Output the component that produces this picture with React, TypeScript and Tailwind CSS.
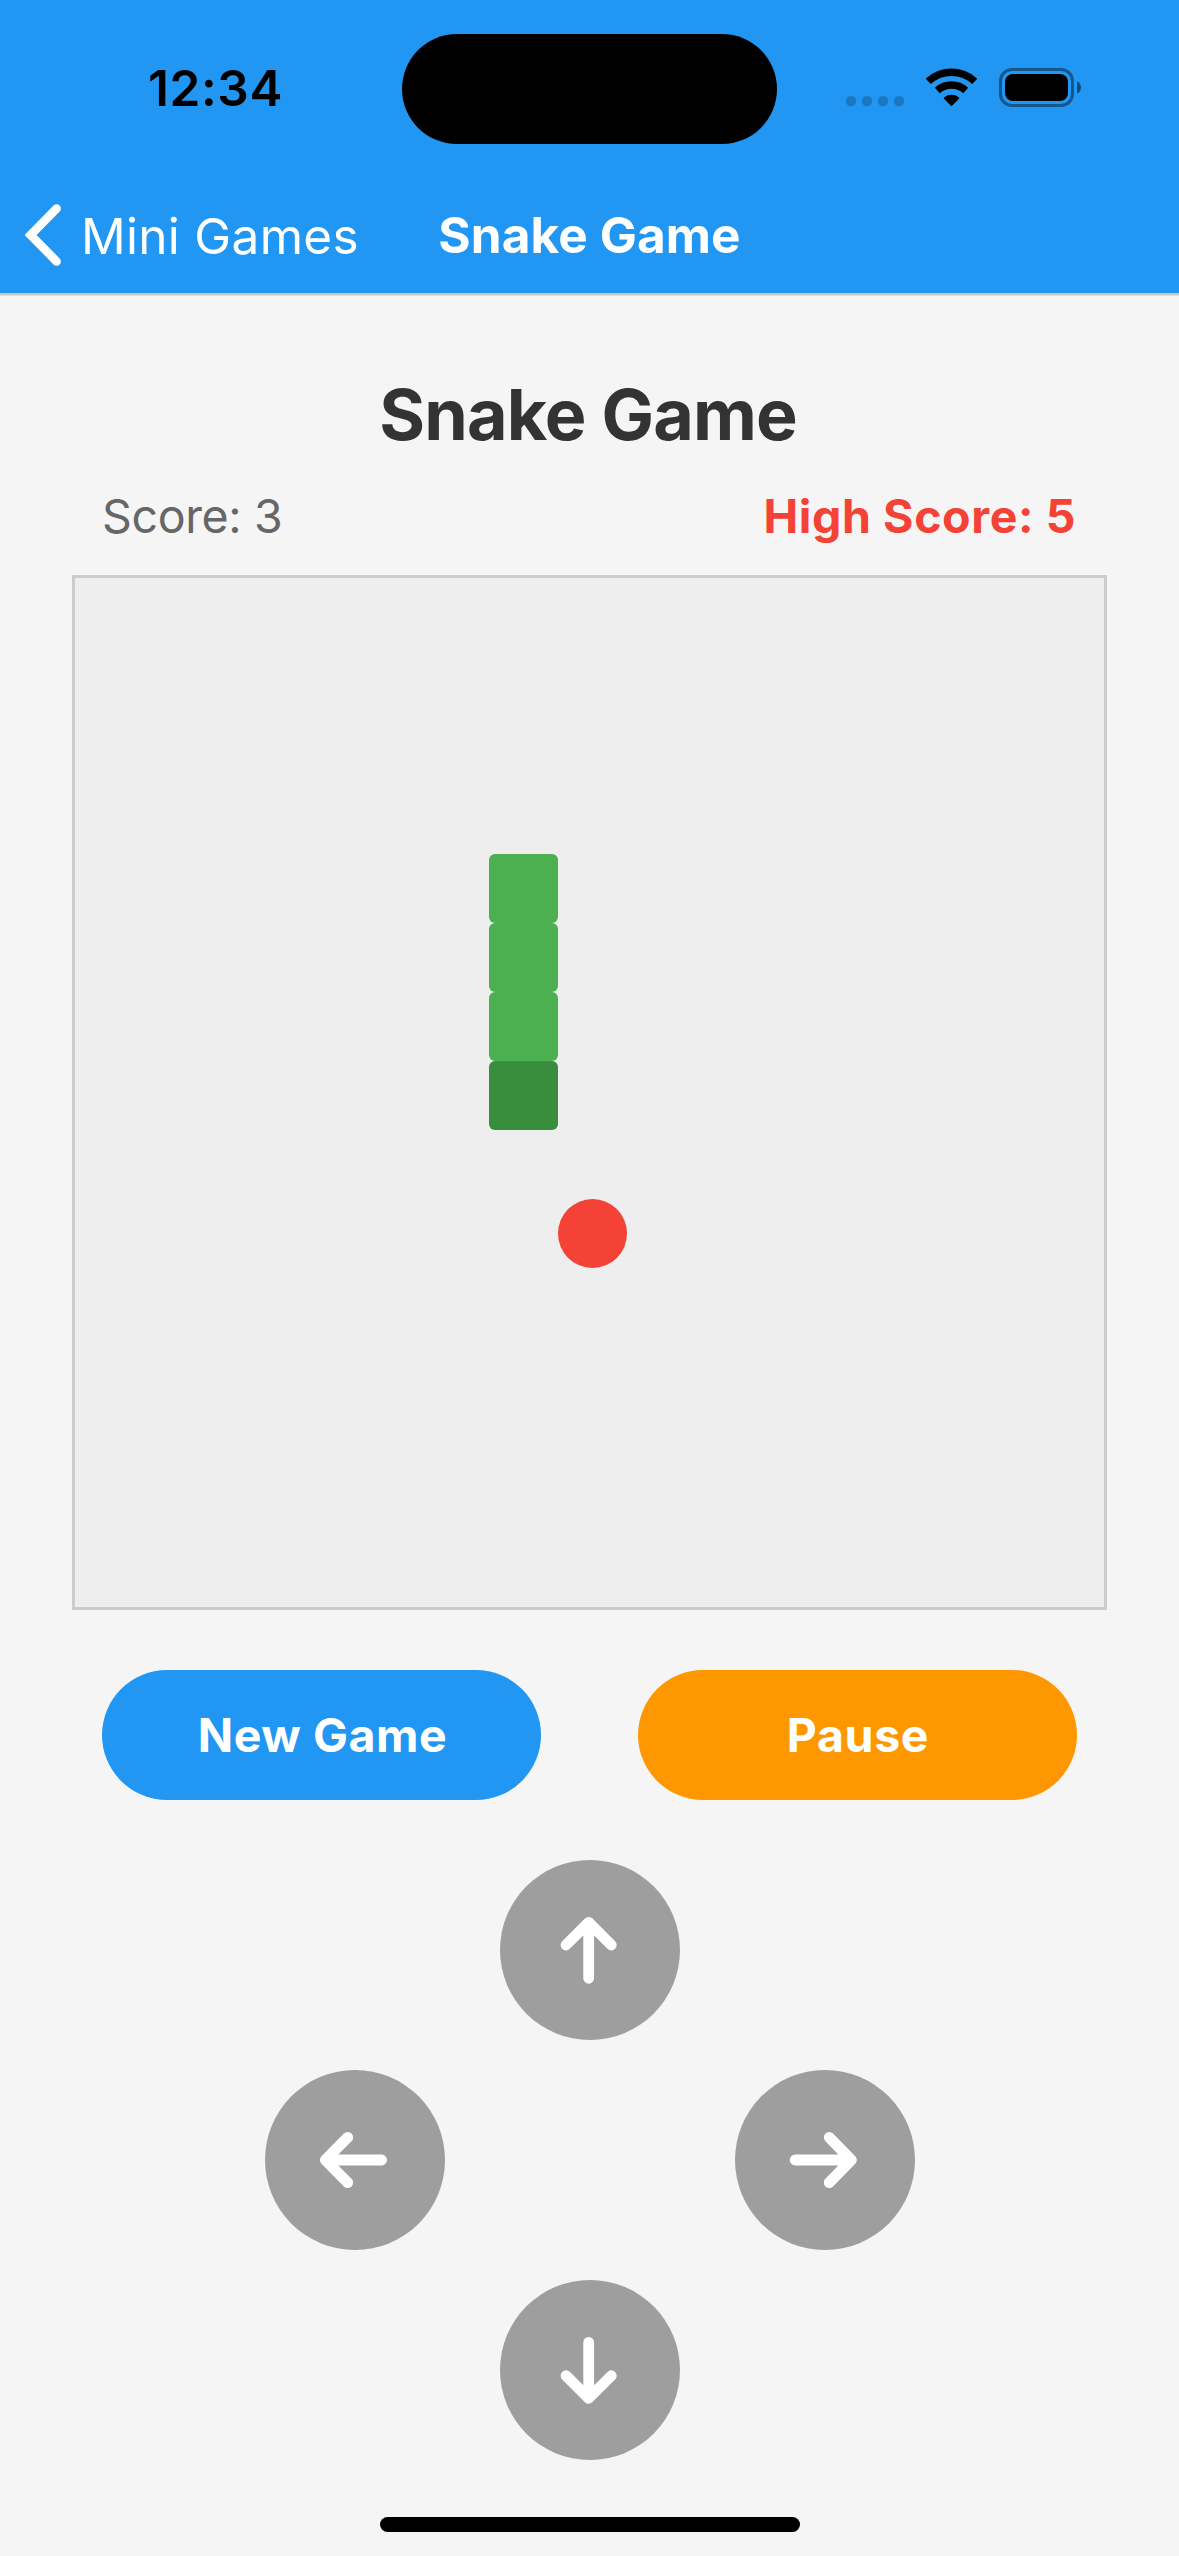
type Direction = "up" | "left" | "right" | "down";

const ARROWS: Record<Direction, string> = {
  up: "M88.7 118.3V62.4M66 85l22.7-22.6L111.3 85",
  left: "M116.6 90H60.3M82.7 67.4L60.3 90l22.4 22.6",
  right: "M60.1 90h56.3M94.2 67.4L116.4 90l-22.2 22.6",
  down: "M88.7 62.4v55.9M66 95.7l22.7 22.6 22.6-22.6",
};

const BOARD_CELLS = 15;

const SNAKE = [
  { x: 6, y: 7, head: true },
  { x: 6, y: 6, head: false },
  { x: 6, y: 5, head: false },
  { x: 6, y: 4, head: false },
];

const FOOD = { x: 7, y: 9 };

function cellStyle(x: number, y: number) {
  return { left: x * 69, top: y * 69 };
}

function StatusBar() {
  return (
    <div className="relative flex h-[177px] items-center justify-between pr-[98px] pb-[2px] pl-[148px]">
      <span className="text-[49.5px] leading-[60px] font-semibold tracking-[0.6px] text-black">12:34</span>
      <div className="absolute top-[33.5px] left-[402px] h-[110.5px] w-[375px] rounded-full bg-black" />
      <div className="flex h-[39px] items-end">
        <div className="mb-px flex gap-[6px]">
          {[0, 1, 2, 3].map((dot) => (
            <span key={dot} className="size-[10px] rounded-[4.5px] bg-black/20" />
          ))}
        </div>
        <svg className="mb-px ml-[22px] h-[38px] w-[51px]" viewBox="0 0 51 38" fill="none">
          <path d="M2.3 13.4A34 34 0 0 1 48.7 13.4" stroke="black" strokeWidth="7.4" />
          <path d="M11.3 22.5A21.2 21.2 0 0 1 39.7 22.5" stroke="black" strokeWidth="7.4" />
          <path
            d="M18.2 31.1C17.6 30.500 17.700 29.700 18.300 29.200a11.8 11.8 0 0 1 14.4 0c.6.5.7 1.3.1 1.900L26.200 37.500c-.5.5-.9.5-1.400 0z"
            fill="black"
          />
        </svg>
        <svg className="ml-[22px] h-[39px] w-[82px]" viewBox="0 0 82 39" fill="none">
          <rect x="1.5" y="1.5" width="72" height="36" rx="11.5" stroke="black" strokeOpacity="0.42" strokeWidth="3" />
          <rect x="6" y="6" width="63" height="27" rx="8" fill="black" />
          <path d="M78 13.3c2.4 1 4 3.4 4 6.2s-1.6 5.2-4 6.2z" fill="black" fillOpacity="0.5" />
        </svg>
      </div>
    </div>
  );
}

function NavBar() {
  return (
    <nav className="grid h-[116px] grid-cols-[1fr_auto_1fr] items-center text-[49.5px] leading-[60px] text-white">
      <button className="flex items-center text-left">
        <svg className="ml-[25px] h-[62px] w-[36px]" viewBox="0 0 36 62" fill="none">
          <path
            d="M31.6 4.6L5.6 31l26 26.4"
            stroke="white"
            strokeWidth="8.600"
            strokeLinecap="round"
            strokeLinejoin="miter"
          />
        </svg>
        <span className="ml-[20px] pt-[2px] tracking-[0.3px] whitespace-nowrap">Mini Games</span>
      </button>
      <h1 className="font-bold tracking-[0.1px]">Snake Game</h1>
    </nav>
  );
}

function Board() {
  return (
    <div
      className="relative mx-auto size-[1035px] border-[3px] border-[#cccccc] bg-[#eeeeee]"
      aria-label={`${BOARD_CELLS} by ${BOARD_CELLS} board`}
    >
      {SNAKE.map((part) => (
        <div
          key={`${part.x}-${part.y}`}
          className={`absolute size-[69px] rounded-[6px] ${part.head ? "bg-[#388e3c]" : "bg-[#4caf50]"}`}
          style={cellStyle(part.x, part.y)}
        />
      ))}
      <div className="absolute size-[69px] rounded-full bg-[#f44336]" style={cellStyle(FOOD.x, FOOD.y)} />
    </div>
  );
}

function ArrowButton({ direction }: { direction: Direction }) {
  return (
    <button aria-label={direction} className="size-[180px] rounded-full bg-[#9e9e9e]">
      <svg className="size-[180px]" viewBox="0 0 180 180" fill="none">
        <path
          d={ARROWS[direction]}
          stroke="white"
          strokeWidth="10.8"
          strokeLinecap="round"
          strokeLinejoin="round"
        />
      </svg>
    </button>
  );
}

export default function App() {
  return (
    <div className="flex h-[2556px] w-[1179px] flex-col overflow-hidden bg-[#f5f5f5] font-['Inter',sans-serif]">
      <header className="h-[293px] shrink-0 bg-[#2196f3]">
        <StatusBar />
        <NavBar />
      </header>
      <div className="h-[2px] shrink-0 bg-[#c8c8c8]" />
      <div className="h-px shrink-0 bg-[#dedede]" />

      <main className="flex flex-col">
        <h2 className="mt-[76px] pr-[3px] text-center text-[70px] leading-[85px] font-bold tracking-[-0.85px] text-[#333333]">
          Snake Game
        </h2>
        <div className="mt-[29px] flex h-[60px] items-center justify-between pr-[103px] pl-[102px] text-[46.5px] leading-[60px]">
          <span className="tracking-[-0.37px] text-[#666666]">Score: 3</span>
          <span className="font-bold tracking-[0.6px] text-[#f44336]">High Score: 5</span>
        </div>
        <div className="mt-[29px]">
          <Board />
        </div>

        <div className="mt-[60px] flex justify-between px-[102px] text-[46.5px] leading-[58px] font-bold text-white">
          <button className="h-[130px] w-[439px] rounded-full bg-[#2196f3] pl-[2px] tracking-[0.55px]">New Game</button>
          <button className="h-[130px] w-[439px] rounded-full bg-[#ff9800] pl-px tracking-[0.62px]">Pause</button>
        </div>

        <div className="mt-[60px] flex flex-col items-center gap-[30px] pl-px">
          <ArrowButton direction="up" />
          <div className="flex gap-[290px]">
            <ArrowButton direction="left" />
            <ArrowButton direction="right" />
          </div>
          <ArrowButton direction="down" />
        </div>
      </main>

      <div className="mt-[57px] h-[15px] w-[420px] shrink-0 self-center rounded-full bg-black" />
    </div>
  );
}
